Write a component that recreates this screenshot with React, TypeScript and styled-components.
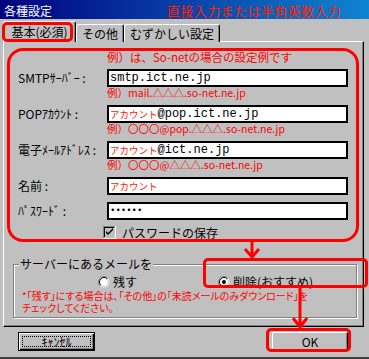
import styled, { createGlobalStyle } from 'styled-components';

const RED = '#ff0000';
const FACE = '#c0c0c0';
const SHADOW = '#808080';
const DARK = '#000000';
const LIGHT = '#ffffff';
const FONT = '"Noto Sans CJK JP", "Liberation Sans", sans-serif';

const GlobalStyle = createGlobalStyle`
  html, body {
    margin: 0;
    padding: 0;
    background: ${FACE};
  }
  body {
    font-family: ${FONT};
    font-size: 12px;
    color: #000;
  }
`;

const Window = styled.div`
  position: relative;
  width: 369px;
  height: 359px;
  box-sizing: border-box;
  display: flex;
  flex-direction: column;
  background: ${FACE};
  border-bottom: 2px solid #404040;
  overflow: hidden;
`;

const TitleBar = styled.div`
  height: 19px;
  box-sizing: border-box;
  display: flex;
  align-items: center;
  padding: 2px 0 0 4px;
  background: linear-gradient(to right, #000080, #1084d0);
`;

const Title = styled.span`
  width: 48px;
  color: ${LIGHT};
  font-size: 12px;
  line-height: 14px;
  white-space: nowrap;
`;

const Hint = styled.span`
  margin-left: 115px;
  color: #ff2000;
  font-size: 13px;
  line-height: 14px;
  letter-spacing: 0.4px;
  white-space: nowrap;
`;

const TabStrip = styled.div`
  position: relative;
  z-index: 1;
  display: flex;
  align-items: flex-end;
  height: 21px;
  margin: 2px 0 -1px;
  padding-left: 3px;
`;

const Tab = styled.div<{ $active?: boolean; $w: number }>`
  position: relative;
  box-sizing: border-box;
  width: ${(p) => p.$w}px;
  height: ${(p) => (p.$active ? 21 : 18)}px;
  display: flex;
  align-items: center;
  justify-content: center;
  padding-top: ${(p) => (p.$active ? 0 : 1)}px;
  background: ${FACE};
  border: 1px solid ${LIGHT};
  border-bottom: none;
  border-right-color: ${DARK};
  border-radius: 3px 3px 0 0;
  box-shadow: inset -1px 0 0 ${SHADOW};
  font-size: 12px;
  line-height: 16px;
  white-space: nowrap;

  ${(p) => p.$active && `
    &::after {
      content: '';
      position: absolute;
      left: -2px;
      right: 2px;
      top: 0;
      bottom: 0;
      border: 3px solid ${RED};
      border-radius: 5px;
    }
  `}
`;

const Panel = styled.div`
  height: 286px;
  margin: 0 5px 0 3px;
  box-sizing: border-box;
  border: 1px solid;
  border-color: ${LIGHT} ${DARK} ${DARK} ${LIGHT};
  box-shadow: inset -1px -1px 0 ${SHADOW};
  padding: 6px 0 0 3px;
`;

const RedBox = styled.div`
  width: 352px;
  box-sizing: border-box;
  border: 3px solid ${RED};
  border-radius: 16px;
  padding-left: 8px;
`;

const Caption = styled.div`
  margin-left: 89px;
  color: ${RED};
  font-size: 11.5px;
  line-height: 12px;
  white-space: nowrap;
`;

const FieldList = styled.div`
  display: flex;
  flex-direction: column;
  gap: 7px;
  margin-top: 6px;
`;

const Field = styled.div`
  display: grid;
  grid-template-columns: 89px 241px;
`;

const Label = styled.span`
  font-size: 12px;
  line-height: 18px;
  white-space: nowrap;
`;

const Input = styled.div`
  height: 18px;
  box-sizing: border-box;
  display: flex;
  align-items: center;
  padding-left: 1px;
  border: 2px solid ${DARK};
  background: ${LIGHT};
  font-family: "Liberation Mono", monospace;
  font-size: 12px;
  white-space: nowrap;
`;

const Account = styled.span`
  color: #ff2000;
  font-family: ${FONT};
  font-size: 9.5px;
`;

const Secret = styled.span`
  font-size: 9px;
`;

const Example = styled.div`
  grid-column: 2;
  color: ${RED};
  font-size: 10.5px;
  line-height: 11px;
  white-space: nowrap;
`;

const CheckRow = styled.label`
  display: flex;
  align-items: center;
  gap: 6px;
  height: 13px;
  margin: 6px 0 0 85px;
  font-size: 12px;
`;

const Group = styled.fieldset`
  position: relative;
  width: 344px;
  min-width: 0;
  box-sizing: border-box;
  margin: 15px 0 0 6px;
  padding: 5px 0 3px 8px;
  border: 1px solid ${SHADOW};
  box-shadow: inset 1px 1px 0 ${LIGHT}, 1px 1px 0 ${LIGHT};
`;

const Legend = styled.legend`
  margin-left: -3px;
  padding: 0 1px;
  background: ${FACE};
  font-size: 12px;
  line-height: 14px;
`;

const RadioRow = styled.div`
  display: grid;
  grid-template-columns: 120px auto;
  height: 12px;
  padding-left: 76px;
`;

const Option = styled.label<{ $marked?: boolean }>`
  position: relative;
  display: flex;
  align-items: center;
  gap: 3px;
  font-size: 12px;
  line-height: 12px;
  white-space: nowrap;

  ${(p) => p.$marked && `
    &::after {
      content: '';
      position: absolute;
      left: -15px;
      right: -12px;
      top: -18px;
      bottom: 0;
      border: 3px solid ${RED};
      border-radius: 5px;
    }
  `}
`;

const Notes = styled.div`
  margin-top: 2px;
`;

const Note = styled.div`
  color: ${RED};
  font-size: 10px;
  line-height: 12px;
  font-feature-settings: "palt";
  white-space: nowrap;
`;

const Footer = styled.div`
  display: flex;
  justify-content: space-between;
  padding: 5px 21px 0 18px;
`;

const Button = styled.button<{ $w: number; $focus?: boolean; $marked?: boolean }>`
  position: relative;
  width: ${(p) => p.$w}px;
  height: 19px;
  padding: 0;
  background: ${FACE};
  font-family: ${FONT};
  font-size: 12px;
  line-height: 14px;
  color: #000;
  border: 1px solid;
  border-color: ${(p) => (p.$focus ? DARK : `${LIGHT} ${DARK} ${DARK} ${LIGHT}`)};
  box-shadow: ${(p) => (p.$focus
    ? `inset 1px 1px 0 ${LIGHT}, inset -1px -1px 0 ${DARK}, inset -2px -2px 0 ${SHADOW}`
    : `inset -1px -1px 0 ${SHADOW}`)};

  ${(p) => p.$focus && `
    &::before {
      content: '';
      position: absolute;
      inset: 3px;
      border: 1px dotted ${DARK};
    }
  `}

  ${(p) => p.$marked && `
    &::after {
      content: '';
      position: absolute;
      left: -7px;
      right: -4px;
      top: -5px;
      bottom: -2px;
      border: 3px solid ${RED};
      border-radius: 5px;
    }
  `}
`;

const Overlay = styled.svg`
  position: absolute;
  left: 0;
  top: 0;
  pointer-events: none;
`;

const Radio = ({ checked }: { checked?: boolean }) => (
  <svg width="12" height="12" viewBox="0 0 12 12">
    <circle cx="6" cy="6" r="5.5" fill={LIGHT} />
    <path d="M2.1 9.9A5.5 5.5 0 0 1 9.9 2.1" fill="none" stroke={SHADOW} />
    <path d="M2.8 9.2A4.5 4.5 0 0 1 9.2 2.8" fill="none" stroke={DARK} />
    <path d="M9.2 2.8A4.5 4.5 0 0 1 2.8 9.2" fill="none" stroke={FACE} />
    {checked && <circle cx="6" cy="6" r="2" fill={DARK} />}
  </svg>
);

const Checkbox = () => (
  <svg width="13" height="13" viewBox="0 0 13 13">
    <rect x="0" y="0" width="13" height="13" fill={LIGHT} />
    <rect x="0" y="0" width="12" height="12" fill={SHADOW} />
    <rect x="1" y="1" width="11" height="11" fill={FACE} />
    <rect x="1" y="1" width="10" height="10" fill={DARK} />
    <rect x="2" y="2" width="9" height="9" fill={FACE} />
    <path d="M3 5v2l2 2 5-5V2L5 7z" fill={DARK} />
  </svg>
);

const fields = [
  { label: 'SMTPｻｰﾊﾞｰ :', value: <>smtp.ict.ne.jp</>, example: '例）mail.△△△.so-net.ne.jp' },
  { label: 'POPｱｶｳﾝﾄ :', value: <><Account>アカウント</Account>@pop.ict.ne.jp</>, example: '例）〇〇〇@pop.△△△.so-net.ne.jp' },
  { label: '電子ﾒｰﾙｱﾄﾞﾚｽ :', value: <><Account>アカウント</Account>@ict.ne.jp</>, example: '例）〇〇〇@△△△.so-net.ne.jp' },
  { label: '名前 :', value: <Account>アカウント</Account> },
  { label: 'ﾊﾟｽﾜｰﾄﾞ :', value: <Secret>••••••</Secret> },
];

export default function App() {
  return (
    <>
      <GlobalStyle />
      <Window>
        <TitleBar>
          <Title>各種設定</Title>
          <Hint>直接入力または半角英数入力</Hint>
        </TitleBar>

        <TabStrip>
          <Tab $active $w={73}>基本(必須)</Tab>
          <Tab $w={48}>その他</Tab>
          <Tab $w={96}>むずかしい設定</Tab>
        </TabStrip>

        <Panel>
          <RedBox>
            <Caption>例）は、So-netの場合の設定例です</Caption>
            <FieldList>
              {fields.map((f) => (
                <Field key={f.label}>
                  <Label>{f.label}</Label>
                  <Input>{f.value}</Input>
                  {f.example && <Example>{f.example}</Example>}
                </Field>
              ))}
            </FieldList>
            <CheckRow>
              <Checkbox />
              パスワードの保存
            </CheckRow>
          </RedBox>

          <Group>
            <Legend>サーバーにあるメールを</Legend>
            <RadioRow>
              <Option><Radio />残す</Option>
              <Option $marked><Radio checked />削除(おすすめ)</Option>
            </RadioRow>
            <Notes>
              <Note>*「残す」にする場合は、「その他」の「未読メールのみダウンロード」を</Note>
              <Note>チェックしてください。</Note>
            </Notes>
          </Group>
        </Panel>

        <Footer>
          <Button $w={77} $focus>ｷｬﾝｾﾙ</Button>
          <Button $w={76} $marked>OK</Button>
        </Footer>

        <Overlay width="369" height="359" viewBox="0 0 369 359">
          <g fill="none" stroke={RED} strokeWidth="3">
            <path d="M252 241V257M245 249l7 8 7-8" />
            <path d="M300 287V327M293 318l7 9 7-9" />
          </g>
        </Overlay>
      </Window>
    </>
  );
}
